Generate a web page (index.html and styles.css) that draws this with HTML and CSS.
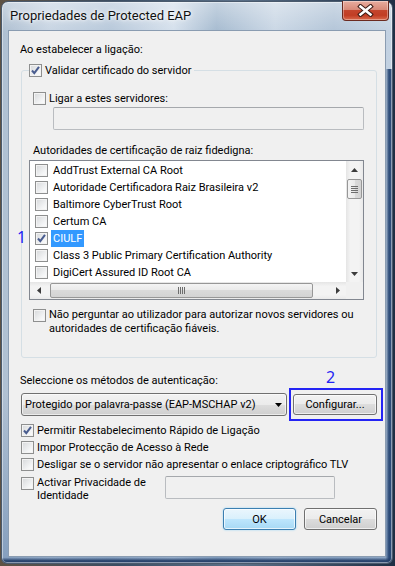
FILE: index.html
```html
<!DOCTYPE html>
<html lang="pt">
<head>
    <meta charset="UTF-8">
    <meta name="viewport" content="width=device-width, initial-scale=1.0">
    <title>Propriedades de Protected EAP</title>
    <link rel="stylesheet" href="styles.css">
</head>
<body>
    <div class="window">
        <div class="titlebar">
            <span class="title">Propriedades de Protected EAP</span>
            <div class="close-btn">
                <svg width="17" height="13" viewBox="0 0 17 13">
                    <path d="M3.5 2.5 L13.5 10.5 M13.5 2.5 L3.5 10.5" stroke="#3b1a14" stroke-width="4.6" stroke-linecap="square"/>
                    <path d="M3.5 2.5 L13.5 10.5 M13.5 2.5 L3.5 10.5" stroke="#fff" stroke-width="2.6" stroke-linecap="square"/>
                </svg>
            </div>
        </div>

        <div class="client">
            <p class="caption">Ao estabelecer a ligação:</p>

            <fieldset class="group">
                <legend>
                    <label class="check"><span class="box checked"></span>Validar certificado do servidor</label>
                </legend>

                <label class="check servers-check"><span class="box"></span>Ligar a estes servidores:</label>
                <div class="textbox servers-input"></div>

                <p class="ca-caption">Autoridades de certificação de raiz fidedigna:</p>

                <div class="list-wrap">
                    <span class="mark mark-one">1</span>
                    <div class="listbox">
                        <ul class="items">
                            <li><span class="box"></span><span class="item-text">AddTrust External CA Root</span></li>
                            <li><span class="box"></span><span class="item-text">Autoridade Certificadora Raiz Brasileira v2</span></li>
                            <li><span class="box"></span><span class="item-text">Baltimore CyberTrust Root</span></li>
                            <li><span class="box"></span><span class="item-text">Certum CA</span></li>
                            <li class="selected"><span class="box checked"></span><span class="item-text">CIULF</span></li>
                            <li><span class="box"></span><span class="item-text">Class 3 Public Primary Certification Authority</span></li>
                            <li><span class="box"></span><span class="item-text">DigiCert Assured ID Root CA</span></li>
                        </ul>
                        <div class="vscroll">
                            <div class="arrow-btn">
                                <svg width="7" height="4" viewBox="0 0 7 4"><path d="M0 4 L3.5 0 L7 4 Z" fill="#3c3c3c"/></svg>
                            </div>
                            <div class="vthumb">
                                <svg width="7" height="7" viewBox="0 0 7 7"><path d="M0 0.5 H7 M0 2.5 H7 M0 4.5 H7 M0 6.5 H7" stroke="#6d6d6d"/></svg>
                            </div>
                            <div class="arrow-btn bottom">
                                <svg width="7" height="4" viewBox="0 0 7 4"><path d="M0 0 L3.5 4 L7 0 Z" fill="#3c3c3c"/></svg>
                            </div>
                        </div>
                        <div class="hscroll">
                            <div class="arrow-btn">
                                <svg width="4" height="7" viewBox="0 0 4 7"><path d="M4 0 L0 3.5 L4 7 Z" fill="#3c3c3c"/></svg>
                            </div>
                            <div class="hthumb">
                                <svg width="7" height="7" viewBox="0 0 7 7"><path d="M0.5 0 V7 M2.5 0 V7 M4.5 0 V7 M6.5 0 V7" stroke="#6d6d6d"/></svg>
                            </div>
                            <div class="arrow-btn right">
                                <svg width="4" height="7" viewBox="0 0 4 7"><path d="M0 0 L4 3.5 L0 7 Z" fill="#3c3c3c"/></svg>
                            </div>
                        </div>
                        <div class="corner"></div>
                    </div>
                </div>

                <label class="check multi"><span class="box"></span><span>Não perguntar ao utilizador para autorizar novos servidores ou<br>autoridades de certificação fiáveis.</span></label>
            </fieldset>

            <p class="method-caption">Seleccione os métodos de autenticação:</p>

            <div class="method-row">
                <div class="combo">
                    <span>Protegido por palavra-passe (EAP-MSCHAP v2)</span>
                    <svg width="7" height="4" viewBox="0 0 7 4"><path d="M0 0 L3.5 4 L7 0 Z" fill="#000"/></svg>
                </div>
                <div class="config-wrap">
                    <span class="mark mark-two">2</span>
                    <button class="btn config-btn">Configurar...</button>
                    <div class="highlight-box"></div>
                </div>
            </div>

            <label class="check row"><span class="box checked"></span>Permitir Restabelecimento Rápido de Ligação</label>
            <label class="check row"><span class="box"></span>Impor Protecção de Acesso à Rede</label>
            <label class="check row"><span class="box"></span>Desligar se o servidor não apresentar o enlace criptográfico TLV</label>

            <div class="privacy-row">
                <label class="check multi privacy"><span class="box"></span><span>Activar Privacidade de<br>Identidade</span></label>
                <div class="textbox privacy-input"></div>
            </div>

            <div class="buttons">
                <button class="btn default">OK</button>
                <button class="btn">Cancelar</button>
            </div>
        </div>
    </div>
</body>
</html>
```

FILE: styles.css
```css
* {
    margin: 0;
    padding: 0;
    box-sizing: border-box;
}

body {
    width: 395px;
    height: 566px;
    overflow: hidden;
    background: linear-gradient(90deg, #5e5244, #3a4d63 30%, #5b7088 60%, #1f2f45);
    font-family: Roboto, "Liberation Sans", sans-serif;
    font-size: 11px;
    color: #000;
}

/* window frame */
.window {
    width: 392px;
    height: 563px;
    margin: 1px 0 0 1px;
    padding: 0 6px 6px;
    display: flex;
    flex-direction: column;
    border: 1px solid #4a5a6d;
    border-radius: 7px 7px 6px 6px;
    background:
        linear-gradient(180deg, rgba(255, 255, 255, 0.35), rgba(255, 255, 255, 0) 30px),
        linear-gradient(180deg, rgba(43, 74, 117, 0) 99%, rgba(35, 62, 104, 0.95) 99.6%),
        linear-gradient(90deg, rgba(31, 63, 110, 0) 98.3%, rgba(31, 63, 110, 0.9) 99.2%) bottom / 100% 88% no-repeat,
        linear-gradient(180deg, rgba(120, 150, 185, 0) 70%, rgba(90, 125, 170, 0.5) 100%),
        linear-gradient(90deg, #aebfd1 0%, #c8d5e3 12%, #b7c8da 28%, #d5e0ec 44%, #a6bbd0 55%, #cad7e5 70%, #b3c5d8 85%, #c3d2e2 100%);
    box-shadow: inset 0 0 0 1px rgba(255, 255, 255, 0.45);
}

.titlebar {
    height: 28px;
    display: flex;
    align-items: flex-start;
}

.title {
    margin: 6px 0 0 2px;
    font-size: 13px;
    line-height: 15px;
    color: #111;
    text-shadow: 0 0 6px #fff, 0 0 3px #fff;
}

.close-btn {
    margin: -1px -3px 0 auto;
    width: 47px;
    height: 20px;
    display: flex;
    justify-content: center;
    align-items: center;
    border: 1px solid #6b2a20;
    border-top: none;
    border-radius: 0 0 4px 4px;
    background: linear-gradient(180deg, #e8ad9f 0%, #d98a79 45%, #c4452d 50%, #c13d24 75%, #d9694c 100%);
    box-shadow: inset 0 0 0 1px rgba(255, 255, 255, 0.35);
}

/* dialog client area */
.client {
    flex: 1;
    display: flex;
    flex-direction: column;
    padding: 11px 8px 0 11px;
    background: #f0f0f0;
    border: 1px solid #8a9cb1;
}

.caption,
.ca-caption,
.method-caption {
    line-height: 15px;
}

.group {
    margin: 6px 0 0 1px;
    padding: 0 11px 21px;
    border: 1px solid #d5dfe5;
    border-radius: 3px;
}

.group legend {
    margin-left: -4px;
    padding: 0 3px 0 0;
    line-height: 15px;
}

/* checkboxes */
.check {
    display: flex;
    align-items: center;
    gap: 3px;
    line-height: 15px;
}

.check.multi {
    align-items: flex-start;
    line-height: 14px;
}

.check.multi .box {
    margin-top: 1px;
}

.box {
    flex: none;
    width: 13px;
    height: 13px;
    border: 1px solid #8e8f8f;
    background: linear-gradient(135deg, #d6d8da, #f4f5f6 70%, #fdfdfd);
    box-shadow: inset 0 0 0 1px #f3f3f3;
}

.box.checked {
    background:
        url("data:image/svg+xml,%3Csvg xmlns='http://www.w3.org/2000/svg' width='11' height='11' viewBox='0 0 11 11'%3E%3Cpath d='M2 5.5 L4.3 8.2 L9 1.8' fill='none' stroke='%234a5d8f' stroke-width='2'/%3E%3C/svg%3E") center / 11px 11px no-repeat,
        linear-gradient(135deg, #d6d8da, #f4f5f6 70%, #fdfdfd);
}

.servers-check {
    margin-top: 13px;
}

.textbox {
    height: 23px;
    border: 1px solid #b9bcc0;
    border-top-color: #a5a8ac;
    border-radius: 2px;
    background: #f0f0f0;
}

.servers-input {
    margin: 1px 0 0 20px;
    width: 311px;
}

.ca-caption {
    margin-top: 13px;
}

/* certificate list */
.list-wrap {
    position: relative;
    margin: 2px 0 0 -4px;
}

.mark {
    position: absolute;
    font-family: "Noto Sans", sans-serif;
    font-size: 16px;
    line-height: 18px;
    color: #2424f4;
}

.mark-one {
    left: -12px;
    top: 68px;
}

.listbox {
    width: 335px;
    height: 140px;
    display: grid;
    grid-template-columns: 1fr 17px;
    grid-template-rows: 1fr 17px;
    border: 1px solid #828790;
    background: #fff;
}

.items {
    list-style: none;
    padding: 1px 0 0 5px;
    overflow: hidden;
}

.items li {
    height: 17px;
    display: flex;
    align-items: center;
    white-space: nowrap;
}

.item-text {
    margin-left: 3px;
    padding: 0 2px;
    line-height: 17px;
}

.items li.selected .item-text {
    background: #3399ff;
    color: #fff;
}

.vscroll {
    display: flex;
    flex-direction: column;
    background: linear-gradient(90deg, #e5e5e5, #f3f3f3 25%, #f3f3f3 75%, #eaeaea);
}

.hscroll {
    display: flex;
    background: linear-gradient(180deg, #e5e5e5, #f3f3f3 25%, #f3f3f3 75%, #eaeaea);
}

.arrow-btn {
    width: 17px;
    height: 17px;
    display: flex;
    justify-content: center;
    align-items: center;
    flex: none;
}

.vscroll .arrow-btn.bottom {
    margin-top: auto;
}

.hscroll .arrow-btn.right {
    margin-left: auto;
}

.vthumb {
    margin: 1px 1px 0;
    height: 20px;
    display: flex;
    justify-content: center;
    align-items: center;
    border: 1px solid #979797;
    border-radius: 2px;
    background: linear-gradient(90deg, #f4f4f4, #e9e9e9 50%, #dadada 50%, #d3d3d3);
}

.hthumb {
    margin: 1px 0 1px 3px;
    width: 263px;
    display: flex;
    justify-content: center;
    align-items: center;
    border: 1px solid #979797;
    border-radius: 2px;
    background: linear-gradient(180deg, #f4f4f4, #e9e9e9 50%, #dadada 50%, #d3d3d3);
}

.corner {
    background: #f0f0f0;
}

.multi.check:last-child {
    margin-top: 8px;
}

/* authentication method */
.method-caption {
    margin-top: 15px;
}

.method-row {
    margin-top: 5px;
    display: flex;
    align-items: flex-start;
}

.combo {
    margin-left: 1px;
    width: 267px;
    height: 23px;
    display: flex;
    align-items: center;
    justify-content: space-between;
    padding: 0 4px 0 3px;
    border: 1px solid #707070;
    border-radius: 3px;
    background: linear-gradient(180deg, #f2f2f2, #ebebeb 50%, #dddddd 50%, #cfcfcf);
    box-shadow: inset 0 0 0 1px rgba(255, 255, 255, 0.6);
    white-space: nowrap;
}

.config-wrap {
    position: relative;
    margin: 1px 0 0 6px;
}

.btn {
    height: 22px;
    font: inherit;
    color: #000;
    border: 1px solid #707070;
    border-radius: 3px;
    background: linear-gradient(180deg, #f2f2f2, #ebebeb 50%, #dddddd 50%, #cfcfcf);
    box-shadow: inset 0 0 0 1px rgba(255, 255, 255, 0.65);
}

.config-btn {
    width: 84px;
    height: 21px;
}

.highlight-box {
    position: absolute;
    left: -4px;
    top: -6px;
    width: 94px;
    height: 33px;
    border: 2px solid #2424f4;
}

.mark-two {
    left: 33px;
    top: -26px;
}

.check.row {
    height: 17px;
    margin-left: 1px;
}

.method-row + .check.row {
    margin-top: 6px;
}

.privacy-row {
    margin-top: 3px;
    display: flex;
    align-items: flex-start;
}

.check.privacy {
    width: 144px;
    margin-left: 1px;
    line-height: 13px;
}

.check.privacy .box {
    margin-top: 1px;
}

.privacy-input {
    width: 170px;
}

.buttons {
    margin-top: 6px;
    display: flex;
    justify-content: flex-end;
    gap: 8px;
}

.buttons .btn {
    width: 73px;
}

.btn.default {
    border-color: #3c7fb1;
    background: linear-gradient(180deg, #eaf6fd, #d9f0fc 50%, #bee6fd 50%, #a7d9f5);
    box-shadow: inset 0 0 0 1px rgba(255, 255, 255, 0.7), 0 0 2px #8fd1f7;
}
```
